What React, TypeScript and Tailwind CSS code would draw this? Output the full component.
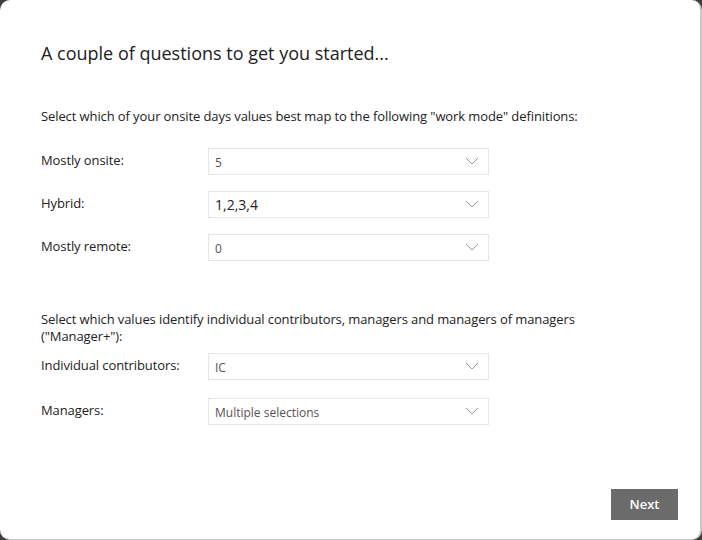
import React from "react";

const font = { fontFamily: '"Open Sans", "Noto Sans", sans-serif' };

function Chevron() {
  return (
    <svg width="14" height="8" viewBox="0 0 14 8" fill="none" className="shrink-0">
      <path d="M1 1l6 6 6-6" stroke="#999" strokeWidth="1" />
    </svg>
  );
}

function Dropdown({ value, big }: { value: string; big?: boolean }) {
  return (
    <div className="flex h-[27px] w-[281px] items-center justify-between border border-[#e6e6e6] bg-white pl-[6px] pr-[9px]">
      <span className={big ? "pt-[1px] text-[14px] text-[#222]" : "pt-[3px] text-[12px] text-[#555]"}>{value}</span>
      <Chevron />
    </div>
  );
}

function Row({ label, value, big }: { label: string; value: string; big?: boolean }) {
  return (
    <div className="flex items-center">
      <div className="w-[167px] text-[13px] tracking-[-0.1px] text-[#222]">{label}</div>
      <Dropdown value={value} big={big} />
    </div>
  );
}

export default function App() {
  return (
    <div className="h-[540px] w-[702px] bg-[#3c3c3c]" style={font}>
      <div className="flex h-full w-full flex-col rounded-[10px] border-r-[2px] border-b border-[#c9c9c9] bg-white pl-[41px] pr-[22px]">
        <h1 className="mt-[40px] text-[18px] font-normal text-[#222]">A couple of questions to get you started...</h1>

        <p className="mt-[40px] text-[13px] tracking-[-0.1px] text-[#222]">
          Select which of your onsite days values best map to the following "work mode" definitions:
        </p>

        <div className="mt-[21px] flex flex-col gap-[16px]">
          <Row label="Mostly onsite:" value="5" />
          <Row label="Hybrid:" value="1,2,3,4" big />
          <Row label="Mostly remote:" value="0" />
        </div>

        <p className="mt-[50px] w-[560px] text-[13px] leading-[17px] tracking-[-0.1px] text-[#222]">
          Select which values identify individual contributors, managers and managers of managers ("Manager+"):
        </p>

        <div className="mt-[8px] flex flex-col gap-[18px]">
          <Row label="Individual contributors:" value="IC" />
          <Row label="Managers:" value="Multiple selections" />
        </div>

        <div className="mt-auto mb-[19px] flex justify-end">
          <button className="h-[31px] w-[67px] bg-[#6b6b6b] text-[13px] font-semibold text-white">Next</button>
        </div>
      </div>
    </div>
  );
}
